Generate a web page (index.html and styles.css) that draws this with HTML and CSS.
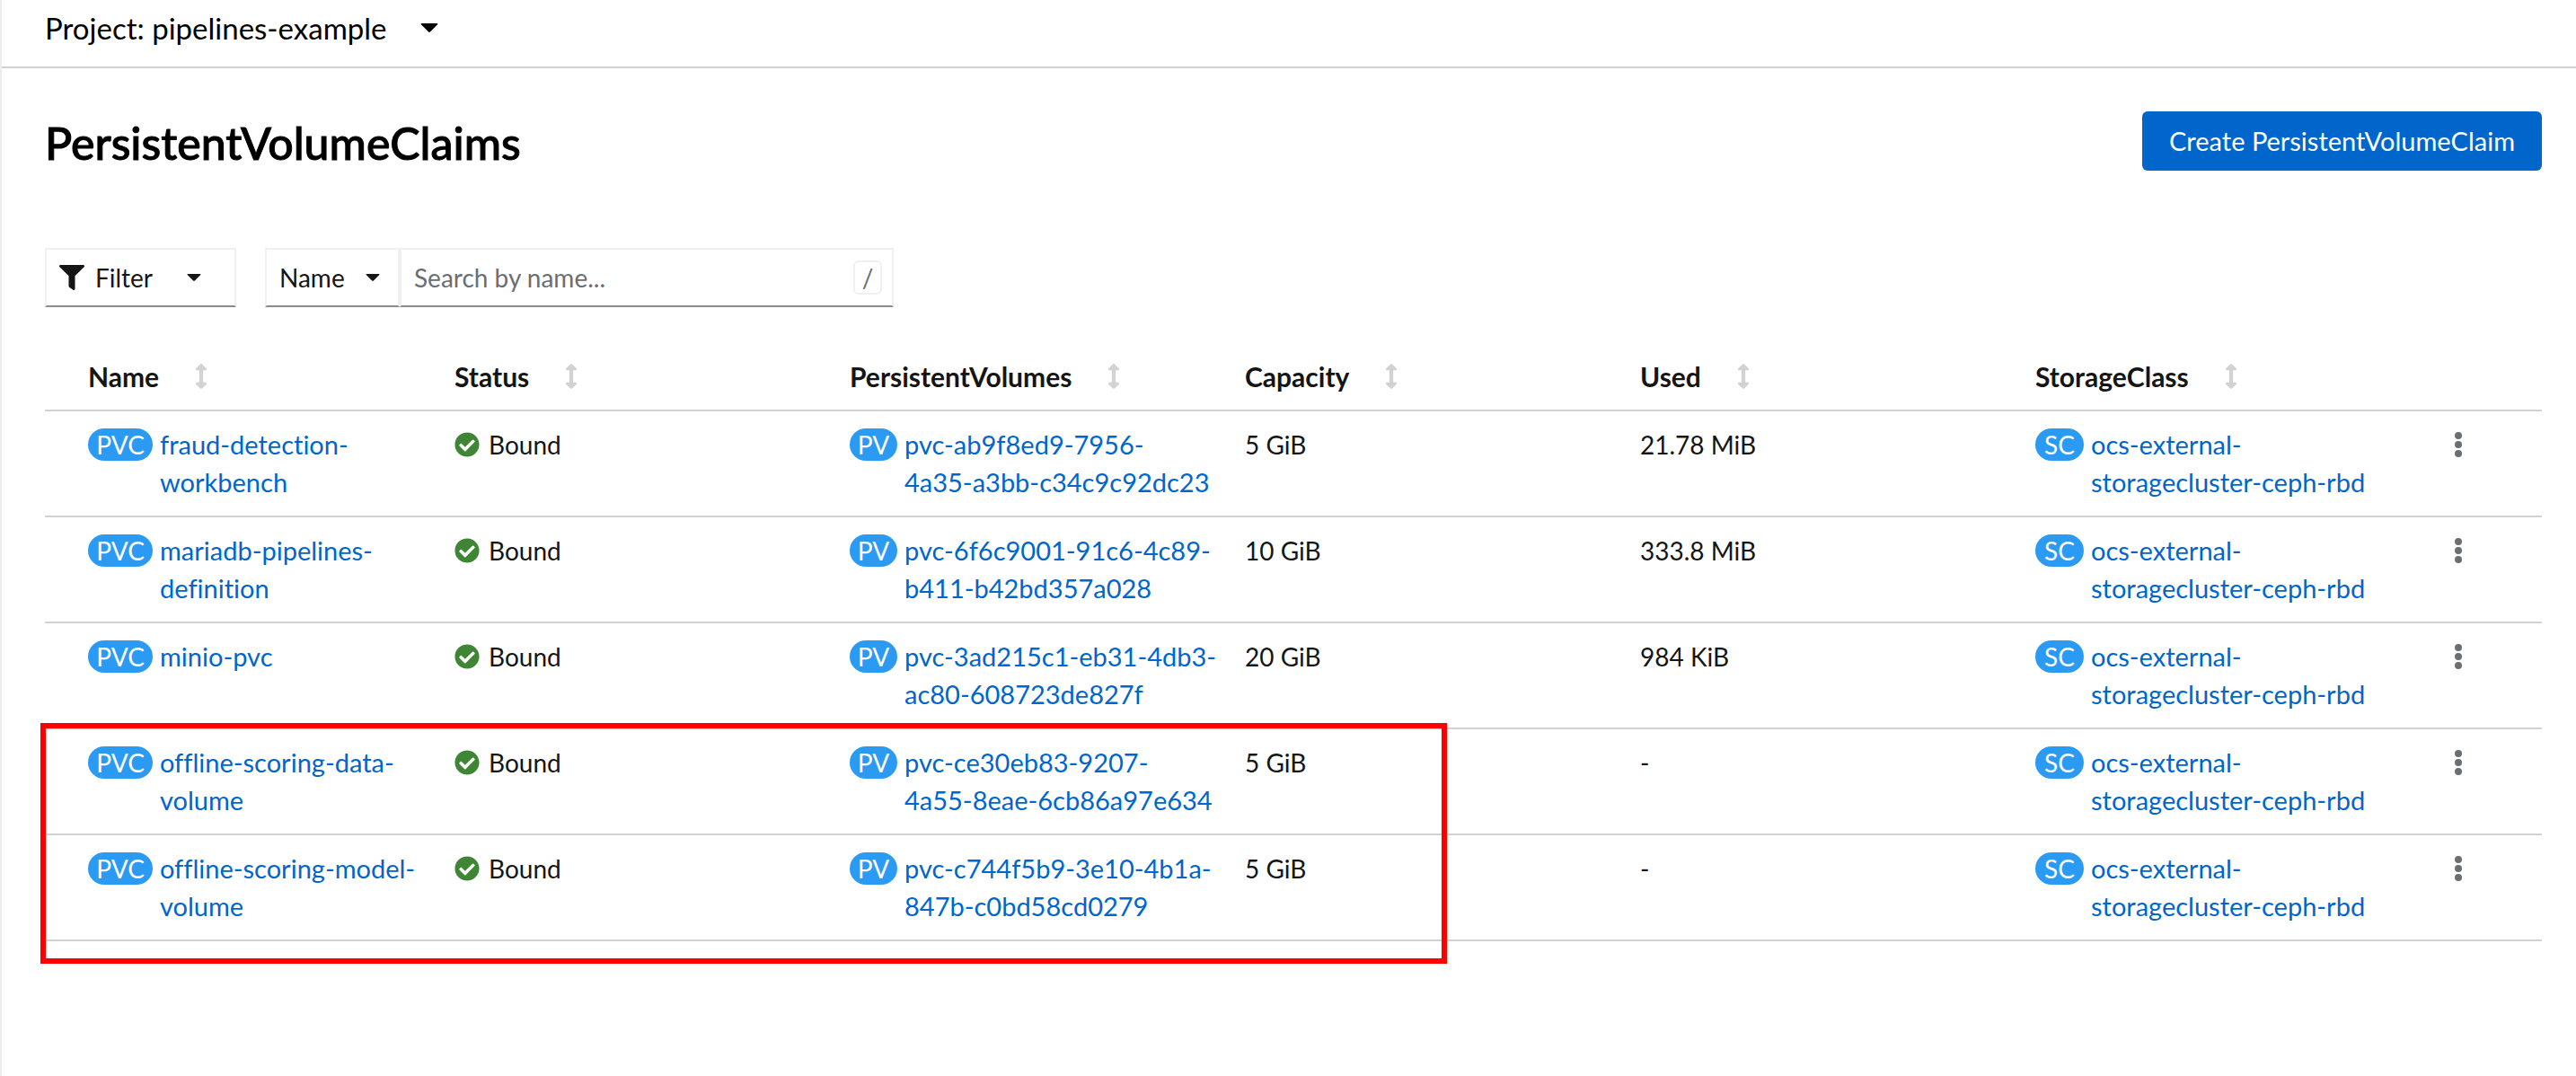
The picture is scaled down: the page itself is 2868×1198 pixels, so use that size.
FILE: index.html
```html
<!DOCTYPE html>
<html lang="en">
<head>
<meta charset="utf-8">
<meta name="viewport" content="width=device-width, initial-scale=1">
<title>PersistentVolumeClaims</title>
<link rel="stylesheet" href="styles.css">
</head>
<body>
<svg class="sprite" aria-hidden="true">
  <symbol id="caret" viewBox="0 0 20 10"><path d="M1.5 0h17q1.6 0 .6 1.300l-8 8q-1.100 1-2.200 0l-8-8Q-.1 0 1.500 0z"/></symbol>
  <symbol id="sort" viewBox="0 0 256 512"><path d="M214.059 377.941H168V134.059h46.059c21.382 0 32.090-25.851 16.971-40.971L144.971 7.029c-9.373-9.373-24.568-9.373-33.941 0L24.971 93.088c-15.119 15.119-4.411 40.971 16.971 40.971H88v243.882H41.941c-21.382 0-32.090 25.851-16.971 40.971l86.059 86.059c9.373 9.373 24.568 9.373 33.941 0l86.059-86.059c15.120-15.119 4.412-40.971-16.970-40.971z"/></symbol>
  <symbol id="check" viewBox="0 0 512 512"><path d="M504 256c0 136.967-111.033 248-248 248S8 392.967 8 256 119.033 8 256 8s248 111.033 248 248zM227.314 387.314l184-184c6.248-6.248 6.248-16.379 0-22.627l-22.627-22.627c-6.248-6.249-16.379-6.249-22.628 0L216 308.118l-70.059-70.059c-6.248-6.248-16.379-6.248-22.628 0l-22.627 22.627c-6.248 6.248-6.248 16.379 0 22.627l104 104c6.249 6.249 16.379 6.249 22.628.001z"/></symbol>
  <symbol id="kebab" viewBox="0 0 8 28"><circle cx="4" cy="4" r="4"/><circle cx="4" cy="14" r="4"/><circle cx="4" cy="24" r="4"/></symbol>
  <symbol id="funnel" viewBox="0 0 512 512"><path d="M487.976 0H24.028C2.710 0-8.047 25.866 7.058 40.971L192 225.941V432c0 7.831 3.821 15.170 10.237 19.662l80 55.980C298.020 518.690 320 507.493 320 487.980V225.941l184.947-184.970C520.021 25.896 509.338 0 487.976 0z"/></symbol>
</svg>

<div class="page">
  <div class="project-bar">
    <div class="picker picker-project">
      <select aria-label="Project"><option>Project: pipelines-example</option></select>
      <svg class="caret caret-large" aria-hidden="true"><use href="#caret"/></svg>
    </div>
  </div>

  <main class="content">
    <header class="heading">
      <h1>PersistentVolumeClaims</h1>
      <button class="primary" type="button">Create PersistentVolumeClaim</button>
    </header>

    <div class="toolbar">
      <button class="filter" type="button" aria-haspopup="menu">
        <svg class="icon" aria-hidden="true"><use href="#funnel"/></svg>
        <span>Filter</span>
        <svg class="caret" aria-hidden="true"><use href="#caret"/></svg>
      </button>
      <div class="search-group">
        <div class="picker picker-field">
          <select aria-label="Search attribute"><option>Name</option></select>
          <svg class="caret" aria-hidden="true"><use href="#caret"/></svg>
        </div>
        <div class="search">
          <input type="text" placeholder="Search by name..." aria-label="Search by name">
          <kbd>/</kbd>
        </div>
      </div>
    </div>

    <div class="table-wrap">
      <table>
        <colgroup><col span="6"><col class="col-actions"></colgroup>
        <thead>
          <tr>
            <th scope="col"><button type="button">Name<svg class="sort" aria-hidden="true"><use href="#sort"/></svg></button></th>
            <th scope="col"><button type="button">Status<svg class="sort" aria-hidden="true"><use href="#sort"/></svg></button></th>
            <th scope="col"><button type="button">PersistentVolumes<svg class="sort" aria-hidden="true"><use href="#sort"/></svg></button></th>
            <th scope="col"><button type="button">Capacity<svg class="sort" aria-hidden="true"><use href="#sort"/></svg></button></th>
            <th scope="col"><button type="button">Used<svg class="sort" aria-hidden="true"><use href="#sort"/></svg></button></th>
            <th scope="col"><button type="button">StorageClass<svg class="sort" aria-hidden="true"><use href="#sort"/></svg></button></th>
            <td></td>
          </tr>
        </thead>
        <tbody>
          <tr>
            <td><div class="resource"><span class="badge badge-pvc">PVC</span><a href="#">fraud-detection-<br>workbench</a></div></td>
            <td><div class="status"><svg class="icon" aria-hidden="true"><use href="#check"/></svg>Bound</div></td>
            <td><div class="resource"><span class="badge badge-pv">PV</span><a href="#">pvc-ab9f8ed9-7956-<br>4a35-a3bb-c34c9c92dc23</a></div></td>
            <td>5 GiB</td>
            <td>21.78 MiB</td>
            <td><div class="resource"><span class="badge badge-sc">SC</span><a href="#">ocs-external-<br>storagecluster-ceph-rbd</a></div></td>
            <td><button class="kebab" type="button" aria-label="Actions"><svg aria-hidden="true"><use href="#kebab"/></svg></button></td>
          </tr>
          <tr>
            <td><div class="resource"><span class="badge badge-pvc">PVC</span><a href="#">mariadb-pipelines-<br>definition</a></div></td>
            <td><div class="status"><svg class="icon" aria-hidden="true"><use href="#check"/></svg>Bound</div></td>
            <td><div class="resource"><span class="badge badge-pv">PV</span><a href="#">pvc-6f6c9001-91c6-4c89-<br>b411-b42bd357a028</a></div></td>
            <td>10 GiB</td>
            <td>333.8 MiB</td>
            <td><div class="resource"><span class="badge badge-sc">SC</span><a href="#">ocs-external-<br>storagecluster-ceph-rbd</a></div></td>
            <td><button class="kebab" type="button" aria-label="Actions"><svg aria-hidden="true"><use href="#kebab"/></svg></button></td>
          </tr>
          <tr>
            <td><div class="resource"><span class="badge badge-pvc">PVC</span><a href="#">minio-pvc</a></div></td>
            <td><div class="status"><svg class="icon" aria-hidden="true"><use href="#check"/></svg>Bound</div></td>
            <td><div class="resource"><span class="badge badge-pv">PV</span><a href="#">pvc-3ad215c1-eb31-4db3-<br>ac80-608723de827f</a></div></td>
            <td>20 GiB</td>
            <td>984 KiB</td>
            <td><div class="resource"><span class="badge badge-sc">SC</span><a href="#">ocs-external-<br>storagecluster-ceph-rbd</a></div></td>
            <td><button class="kebab" type="button" aria-label="Actions"><svg aria-hidden="true"><use href="#kebab"/></svg></button></td>
          </tr>
          <tr>
            <td><div class="resource"><span class="badge badge-pvc">PVC</span><a href="#">offline-scoring-data-<br>volume</a></div></td>
            <td><div class="status"><svg class="icon" aria-hidden="true"><use href="#check"/></svg>Bound</div></td>
            <td><div class="resource"><span class="badge badge-pv">PV</span><a href="#">pvc-ce30eb83-9207-<br>4a55-8eae-6cb86a97e634</a></div></td>
            <td>5 GiB</td>
            <td>-</td>
            <td><div class="resource"><span class="badge badge-sc">SC</span><a href="#">ocs-external-<br>storagecluster-ceph-rbd</a></div></td>
            <td><button class="kebab" type="button" aria-label="Actions"><svg aria-hidden="true"><use href="#kebab"/></svg></button></td>
          </tr>
          <tr>
            <td><div class="resource"><span class="badge badge-pvc">PVC</span><a href="#">offline-scoring-model-<br>volume</a></div></td>
            <td><div class="status"><svg class="icon" aria-hidden="true"><use href="#check"/></svg>Bound</div></td>
            <td><div class="resource"><span class="badge badge-pv">PV</span><a href="#">pvc-c744f5b9-3e10-4b1a-<br>847b-c0bd58cd0279</a></div></td>
            <td>5 GiB</td>
            <td>-</td>
            <td><div class="resource"><span class="badge badge-sc">SC</span><a href="#">ocs-external-<br>storagecluster-ceph-rbd</a></div></td>
            <td><button class="kebab" type="button" aria-label="Actions"><svg aria-hidden="true"><use href="#kebab"/></svg></button></td>
          </tr>
        </tbody>
      </table>
      <div class="highlight" aria-hidden="true"></div>
    </div>
  </main>
</div>
</body>
</html>
```

FILE: styles.css
```css
*, *::before, *::after { box-sizing: border-box; }

body {
  margin: 0;
  background: #fff;
  color: #151515;
  font-family: Lato, "Open Sans", sans-serif;
  font-size: 28px;
  line-height: 42px;
  font-variant-ligatures: none;
}

button, select, input, kbd { font: inherit; color: inherit; }
button, select { cursor: pointer; }
a { color: #06c; font-size: 29px; text-decoration: none; }
svg { display: block; fill: currentColor; flex: none; }
.sprite { display: none; }

.page { min-height: 100vh; border-left: 2px solid #ededed; }

.project-bar {
  padding: 7px 48px 19px;
  border-bottom: 2px solid #d2d2d2;
  color: #000;
  font-size: 33px;
  line-height: 48px;
}

.picker { display: inline-grid; align-items: center; vertical-align: top; }
.picker > * { grid-area: 1 / 1; }
.picker select {
  appearance: none;
  height: 100%;
  margin: 0;
  padding: 0;
  border: 0;
  background: transparent;
}
.picker .caret { justify-self: end; pointer-events: none; }
.picker-project { width: 438px; height: 48px; }

.caret { width: 16px; height: 8px; }
.caret-large { width: 20px; height: 10px; }
.icon { width: 28px; height: 28px; }

.content { padding: 48px 38px 48px 48px; }

.heading { display: flex; justify-content: space-between; align-items: flex-start; }
h1 {
  margin: 0;
  padding-top: 4px;
  color: #000;
  font-size: 50px;
  line-height: 62px;
  font-weight: 500;
  -webkit-text-stroke: 1px currentColor;
}
.primary {
  padding: 12px 30px;
  border: 0;
  border-radius: 6px;
  background: #06c;
  color: #fff;
  font-size: 29px;
}

.toolbar { display: flex; gap: 32px; margin-top: 86px; }

.filter, .picker-field, .search {
  height: 66px;
  border: 2px solid #f0f0f0;
  border-bottom-color: #8a8d90;
  background: #fff;
}
.filter {
  display: flex;
  align-items: center;
  gap: 12px;
  width: 213px;
  padding: 0 14px;
}
.filter .caret { margin-left: 26px; }

.search-group { display: flex; }
.picker-field { width: 150px; padding: 0 20px 0 14px; }
.search { display: flex; align-items: center; width: 550px; padding: 0 11px 0 14px; }
.search input {
  flex: 1;
  min-width: 0;
  padding: 0;
  border: 0;
  outline: 0;
  background: transparent;
}
.search input::placeholder { color: #6a6e73; opacity: 1; }
.search kbd {
  width: 32px;
  height: 38px;
  border: 2px solid #f0f0f0;
  border-radius: 6px;
  color: #6a6e73;
  line-height: 34px;
  text-align: center;
}

.table-wrap { position: relative; margin-top: 24px; }
table { width: 100%; table-layout: fixed; border-collapse: separate; border-spacing: 0; }
.col-actions { width: 140px; }
th, td {
  padding: 16px;
  border-bottom: 2px solid #d2d2d2;
  text-align: left;
  vertical-align: top;
}
thead th, thead td { padding-top: 32px; }
th:first-child, td:first-child { padding-left: 48px; }
th button {
  display: flex;
  align-items: center;
  gap: 40px;
  padding: 0;
  border: 0;
  background: transparent;
  font-size: 30px;
  font-weight: 700;
}
.sort { width: 14px; height: 28px; color: #d2d2d2; }

.resource, .status { display: flex; align-items: flex-start; gap: 8px; white-space: nowrap; }
.status { align-items: center; gap: 10px; }
.status .icon { color: #3e8635; }

.badge {
  flex: none;
  height: 36px;
  margin-top: 3px;
  border-radius: 18px;
  background: #2b9af3;
  color: #fff;
  line-height: 36px;
  text-align: center;
}
.badge-pvc { width: 72px; }
.badge-pv { width: 53px; }
.badge-sc { width: 54px; }

.kebab {
  display: flex;
  align-items: center;
  height: 42px;
  padding: 0 27px;
  border: 0;
  background: transparent;
  color: #6a6e73;
}
.kebab svg { width: 8px; height: 28px; }

/* Call-out drawn round the last two rows */
.highlight {
  position: absolute;
  left: -5px;
  bottom: -25px;
  width: 1566px;
  height: 268px;
  border: 6px solid #f00;
  pointer-events: none;
}
```
